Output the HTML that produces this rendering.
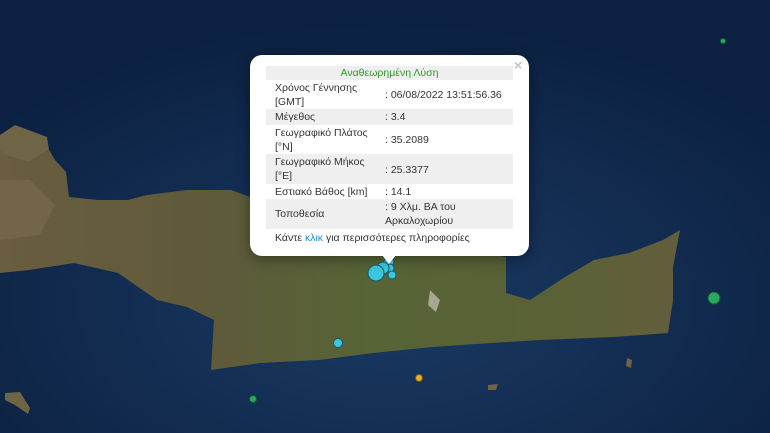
<!DOCTYPE html>
<html><head><meta charset="utf-8"><style>
html,body{margin:0;padding:0;width:770px;height:433px;overflow:hidden;background:#0f2748;font-family:"Liberation Sans","DejaVu Sans",sans-serif}
svg{position:absolute;left:0;top:0}
.pop{position:absolute;left:250px;top:55px;width:279px;height:201px;background:#fff;border-radius:12px;box-shadow:0 3px 14px rgba(0,0,0,.4)}
.tip{position:absolute;left:382px;top:255px;width:0;height:0;border-left:7px solid transparent;border-right:7px solid transparent;border-top:9px solid #fff}
.x{position:absolute;left:514px;top:57px;color:#c3c3c3;font-size:14px;font-weight:bold}
.t{position:absolute;left:266px;width:247px;font-size:10.5px;color:#333;line-height:14px}
.r{position:absolute;left:0;width:247px}
.g{background:#efefef}
.a{position:absolute;left:9px}
.b{position:absolute;left:119px}
</style></head><body>
<svg width="770" height="433" viewBox="0 0 770 433">
<defs>
<radialGradient id="sea" cx="50%" cy="70%" r="65%"><stop offset="0" stop-color="#1a3a63"/><stop offset="1" stop-color="#0c2141"/></radialGradient>
<linearGradient id="land" x1="0" y1="0" x2="1" y2="0"><stop offset="0" stop-color="#6a5d40"/><stop offset=".3" stop-color="#5f5a3a"/><stop offset=".55" stop-color="#566436"/><stop offset=".8" stop-color="#5a6136"/><stop offset="1" stop-color="#635e3c"/></linearGradient>
</defs>
<rect width="770" height="433" fill="url(#sea)"/>
<path d="M0,153 L10,157 29,162 49,150 47,137 15,125 0,135Z" fill="#6f6446"/>
<path d="M0,150 L10,157 29,162 49,150 55,160 66,172 69,197 98,200 128,200 147,195 187,190 231,190 250,197 300,230 360,250 420,255 470,250 506,257 506,293 530,300 565,277 594,260 629,253 663,240 680,230 673,267 673,300 668,333 614,337 540,340 491,343 432,347 373,353 319,360 260,363 211,370 214,320 187,307 157,300 118,273 74,263 29,270 0,273Z" fill="url(#land)"/>
<path d="M0,180 L30,180 55,205 40,235 0,240Z" fill="#7d6e52" opacity=".5"/>
<path d="M430,290 L440,300 436,312 428,305Z" fill="#c9c4b8" opacity=".7"/>
<path d="M5,393 L20,392 30,408 28,414 15,405 5,400Z" fill="#6f6446"/>
<path d="M488,385 L498,384 496,390 488,390Z" fill="#6f6446"/>
<path d="M627,358 L632,360 631,368 626,366Z" fill="#6f6446"/>
<g stroke="#1b5a6e" stroke-width="1">
<circle cx="389" cy="262" r="5" fill="#3bc8de"/>
<circle cx="390" cy="268" r="4" fill="#3bc8de"/>
<circle cx="383" cy="268" r="6" fill="#3bc8de"/>
<circle cx="392" cy="275" r="4" fill="#3bc8de"/>
<circle cx="376" cy="273" r="8" fill="#3bc8de"/>
<circle cx="338" cy="343" r="4.5" fill="#3bc8de"/>
<circle cx="419" cy="378" r="3.5" fill="#e0b030" stroke="#7a5a10"/>
<circle cx="253" cy="399" r="3.5" fill="#2aa860" stroke="#145a30"/>
<circle cx="714" cy="298" r="6" fill="#2aa860" stroke="#145a30"/>
<circle cx="723" cy="41" r="2.5" fill="#2aa860" stroke="#145a30"/>
</g>
</svg>
<div class="pop"></div><div class="tip"></div><div class="x">×</div>
<div class="t" style="top:66px">
<div class="r g" style="top:0;height:14px;text-align:center;color:#2a9a2a">Αναθεωρημένη Λύση</div>
<div class="r" style="top:14px;height:29px"><span class="a" style="top:1px">Χρόνος Γέννησης<br>[GMT]</span><span class="b" style="top:8px">: 06/08/2022 13:51:56.36</span></div>
<div class="r g" style="top:43px;height:16px"><span class="a" style="top:1px">Μέγεθος</span><span class="b" style="top:1px">: 3.4</span></div>
<div class="r" style="top:59px;height:29px"><span class="a" style="top:1px">Γεωγραφικό Πλάτος<br>[°N]</span><span class="b" style="top:8px">: 35.2089</span></div>
<div class="r g" style="top:88px;height:30px"><span class="a" style="top:1px">Γεωγραφικό Μήκος<br>[°E]</span><span class="b" style="top:9px">: 25.3377</span></div>
<div class="r" style="top:118px;height:15px"><span class="a" style="top:1px">Εστιακό Βάθος [km]</span><span class="b" style="top:1px">: 14.1</span></div>
<div class="r g" style="top:133px;height:30px"><span class="a" style="top:8px">Τοποθεσία</span><span class="b" style="top:1px">: 9 Χλμ. ΒΑ του<br>Αρκαλοχωρίου</span></div>
<div class="r" style="top:164px;height:15px"><span class="a" style="top:1px">Κάντε <span style="color:#1a8fc9">κλικ</span> για περισσότερες πληροφορίες</span></div>
</div>
</body></html>
